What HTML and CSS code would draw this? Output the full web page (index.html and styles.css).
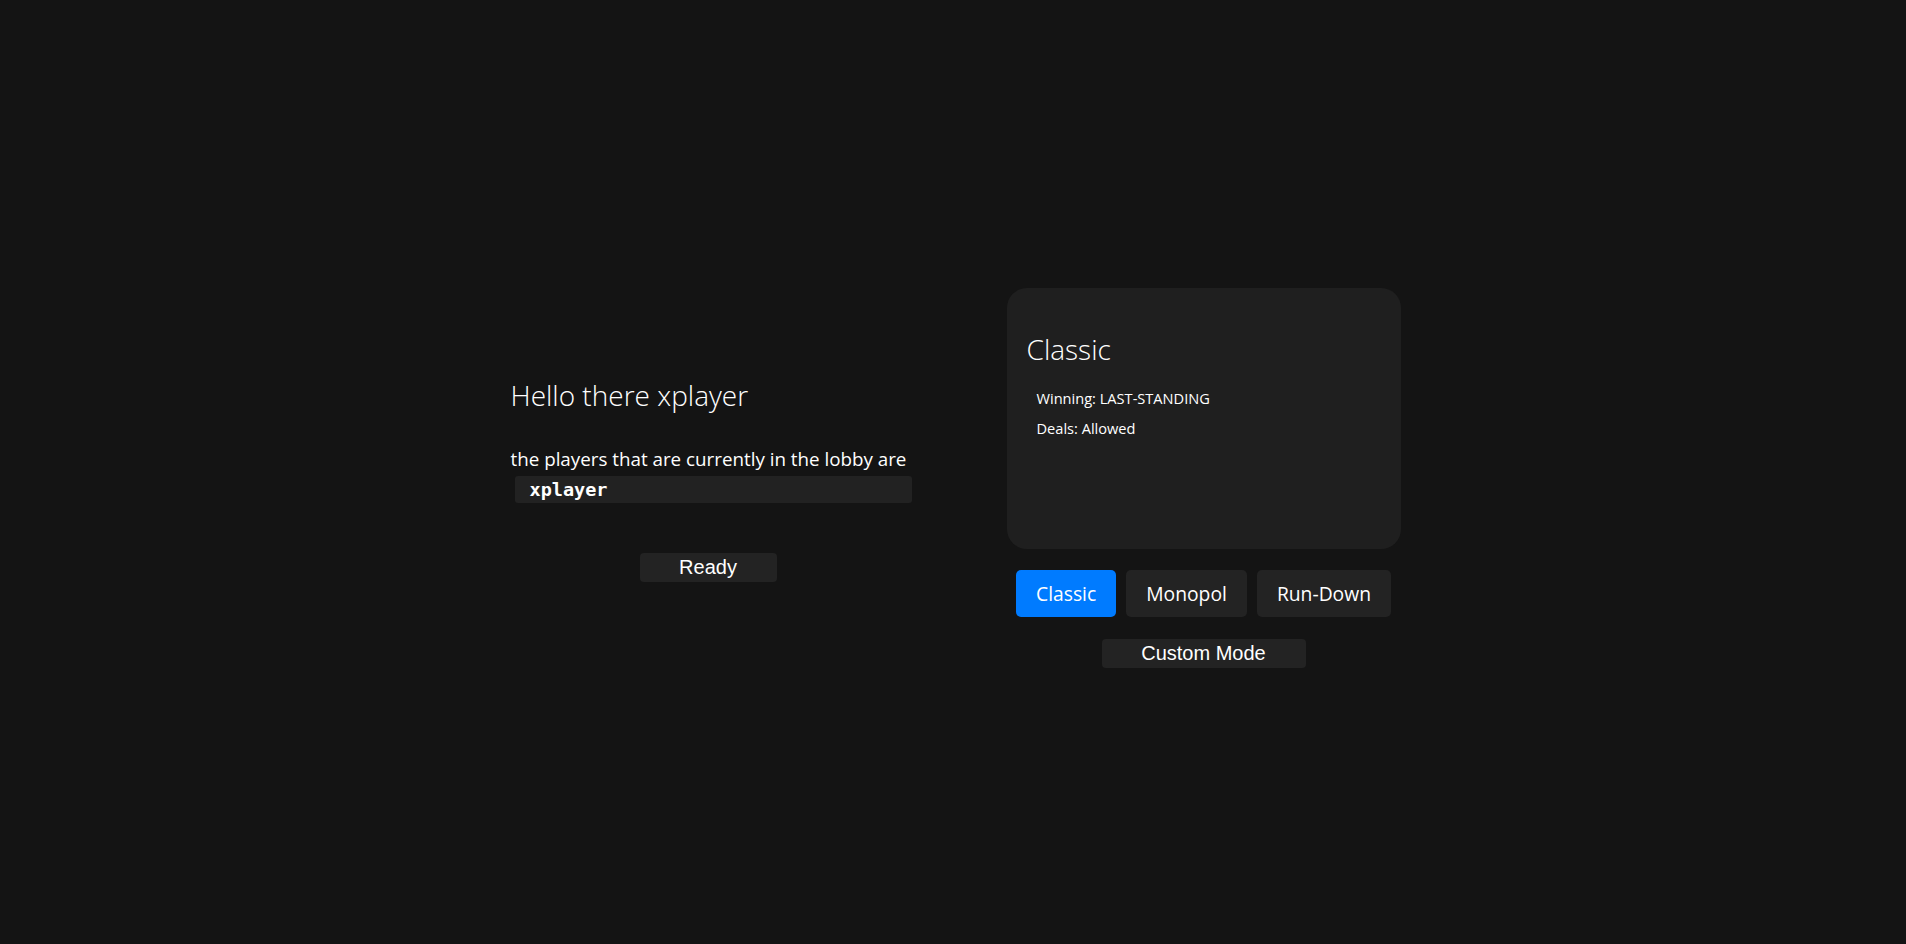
FILE: index.html
```html
<!DOCTYPE html>
<html>
<head>
<meta charset="utf-8">
<link rel="stylesheet" href="styles.css">
</head>
<body>
<div class="page">
  <div class="lobby">
    <h2 class="greeting">Hello there xplayer</h2>
    <p class="players-label">the players that are currently in the lobby are</p>
    <ul class="player-list"><li class="player">xplayer</li></ul>
    <div class="ready-row"><button class="ready-btn">Ready</button></div>
  </div>
  <div class="modes">
    <div class="mode-card">
      <h3 class="mode-title">Classic</h3>
      <p class="mode-rule">Winning: LAST-STANDING</p>
      <p class="mode-rule">Deals: Allowed</p>
    </div>
    <div class="mode-tabs">
      <button class="tab active">Classic</button>
      <button class="tab">Monopol</button>
      <button class="tab">Run-Down</button>
    </div>
    <button class="custom-btn">Custom Mode</button>
  </div>
</div>
</body>
</html>
```
FILE: styles.css
```css
html, body {
  margin: 0;
  padding: 0;
  background: #141414;
  color: #fff;
  font-family: "Open Sans", "Noto Sans", sans-serif;
}
.page {
  height: 944px;
  display: flex;
  justify-content: center;
  align-items: center;
  gap: 95px;
  padding-left: 5px;
  padding-top: 12px;
  box-sizing: border-box;
}
.lobby {
  width: 401px;
  display: flex;
  flex-direction: column;
}
.greeting {
  font-weight: 300;
  font-size: 28px;
  margin: 0 0 31px 0;
  line-height: 40px;
}
.players-label {
  font-size: 18.8px;
  margin: 0;
  line-height: 26px;
}
.player-list {
  list-style: none;
  margin: 4px 0 0 4px;
  padding: 0;
  background: #222222;
  border-radius: 3px;
  height: 27px;
}
.player {
  font-family: "DejaVu Sans Mono", monospace;
  font-weight: bold;
  font-size: 18.5px;
  line-height: 27px;
  padding-left: 15px;
}
.ready-row {
  display: flex;
  justify-content: center;
  margin-top: 50px;
  padding-right: 6px;
}
.ready-btn, .custom-btn {
  font-family: "Liberation Sans", Arial, sans-serif;
  font-size: 20px;
  color: #fff;
  background: #232323;
  border: none;
  border-radius: 4px;
  height: 29px;
  padding: 0;
}
.ready-btn { width: 137px; }
.custom-btn { width: 204px; }
.modes {
  display: flex;
  flex-direction: column;
  align-items: center;
  width: 394px;
}
.mode-card {
  width: 394px;
  height: 261px;
  background: #1f1f1f;
  border-radius: 20px;
  box-sizing: border-box;
  padding: 41px 20px 0;
}
.mode-title {
  font-weight: 300;
  font-size: 28px;
  margin: 0 0 20px 0;
  line-height: 40px;
}
.mode-rule {
  font-size: 14.6px;
  margin: 0 0 11px 10px;
  line-height: 19px;
}
.mode-tabs {
  display: flex;
  gap: 10px;
  margin-top: 21px;
}
.tab {
  font-family: "Open Sans", "Noto Sans", sans-serif;
  font-size: 19.3px;
  color: #fff;
  background: #232323;
  border: none;
  border-radius: 5px;
  height: 47px;
  padding: 0 20px;
}
.tab.active { background: #007bff; }
.custom-btn { margin-top: 22px; }
```
